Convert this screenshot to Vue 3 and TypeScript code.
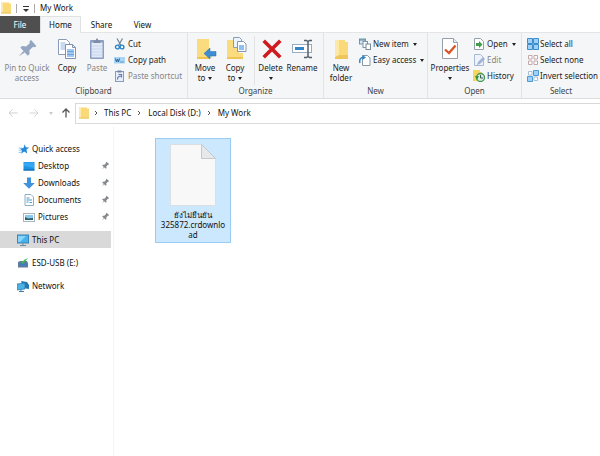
<script setup lang="ts">
interface Command {
  icon: string
  lines: string[]
  size: 'wide' | 'normal' | 'narrow'
  menu?: boolean
  disabled?: boolean
  divided?: boolean
}
interface SmallCommand {
  icon: string
  label: string
  menu?: boolean
  disabled?: boolean
}
interface Group {
  name: string
  key: string
  large: Command[]
  small: SmallCommand[]
}
interface Place {
  icon: string
  label: string
  kind: 'root' | 'pinned'
  current?: boolean
}

const groups: Group[] = [
  {
    name: 'Clipboard',
    key: 'clipboard',
    large: [
      { icon: 'pin', lines: ['Pin to Quick', 'access'], size: 'wide', disabled: true },
      { icon: 'copy', lines: ['Copy'], size: 'narrow' },
      { icon: 'paste', lines: ['Paste'], size: 'narrow', disabled: true },
    ],
    small: [
      { icon: 'cut', label: 'Cut' },
      { icon: 'path', label: 'Copy path' },
      { icon: 'shortcut', label: 'Paste shortcut', disabled: true },
    ],
  },
  {
    name: 'Organize',
    key: 'organize',
    large: [
      { icon: 'move', lines: ['Move', 'to'], size: 'narrow', menu: true },
      { icon: 'copyto', lines: ['Copy', 'to'], size: 'narrow', menu: true },
      { icon: 'delete', lines: ['Delete', ''], size: 'narrow', menu: true, divided: true },
      { icon: 'rename', lines: ['Rename'], size: 'normal' },
    ],
    small: [],
  },
  {
    name: 'New',
    key: 'new',
    large: [{ icon: 'folder', lines: ['New', 'folder'], size: 'narrow' }],
    small: [
      { icon: 'newitem', label: 'New item', menu: true },
      { icon: 'easy', label: 'Easy access', menu: true },
    ],
  },
  {
    name: 'Open',
    key: 'open',
    large: [{ icon: 'properties', lines: ['Properties', ''], size: 'normal', menu: true }],
    small: [
      { icon: 'open', label: 'Open', menu: true },
      { icon: 'edit', label: 'Edit', disabled: true },
      { icon: 'history', label: 'History' },
    ],
  },
  {
    name: 'Select',
    key: 'select',
    large: [],
    small: [
      { icon: 'all', label: 'Select all' },
      { icon: 'none', label: 'Select none' },
      { icon: 'invert', label: 'Invert selection' },
    ],
  },
]

const tabs = ['Home', 'Share', 'View']
const crumbs = ['This PC', 'Local Disk (D:)', 'My Work']
const places: Place[] = [
  { icon: 'star', label: 'Quick access', kind: 'root' },
  { icon: 'desktop', label: 'Desktop', kind: 'pinned' },
  { icon: 'downloads', label: 'Downloads', kind: 'pinned' },
  { icon: 'documents', label: 'Documents', kind: 'pinned' },
  { icon: 'pictures', label: 'Pictures', kind: 'pinned' },
  { icon: 'pc', label: 'This PC', kind: 'root', current: true },
  { icon: 'usb', label: 'ESD-USB (E:)', kind: 'root' },
  { icon: 'network', label: 'Network', kind: 'root' },
]
</script>

<template>
  <div class="explorer">
    <svg class="sprite" aria-hidden="true">
      <symbol id="i-pin" viewBox="0 0 24 24">
        <g transform="rotate(48 12 12)" fill="#94a5c1">
          <path d="M8 3h8v2l-1.500 1v5l3 2.500v2.500H6.500v-2.500l3-2.500V6L8 5z" />
          <path d="M11 16h2l-1 7z" />
        </g>
      </symbol>
      <symbol id="i-copy" viewBox="0 0 24 24">
        <path d="M3.500 2.500h8l3 3v12h-11z" fill="#fff" stroke="#8c9bb4" />
        <path d="M5.500 6h5M5.500 8h7M5.500 10h7M5.500 12h7" stroke="#8db7e6" />
        <path d="M10.500 7.500h7l3 3v11h-10z" fill="#fff" stroke="#7f92b2" />
        <path d="M17.500 7.500v3h3" fill="none" stroke="#7f92b2" />
        <path d="M12 12h7v8h-7z" fill="#9fc8f2" />
        <path d="M12 14.500h7M12 17.500h7" stroke="#6ca6df" />
      </symbol>
      <symbol id="i-paste" viewBox="0 0 24 24">
        <rect x="5" y="3" width="14" height="19" rx="1" fill="#8b9ec4" />
        <path d="M6.500 5.500h11v15h-11z" fill="#e1e9f7" />
        <path d="M7 9h10M7 12h10M7 15h10M7 18h10" stroke="#c6d5ef" />
        <path d="M8.500 3.500h2l1-2h1l1 2h2v2.500h-7z" fill="#7f8ca6" />
      </symbol>
      <symbol id="i-cut" viewBox="0 0 12 12">
        <path d="M3 0.500l4 7M8.500 0.500l-4 7" stroke="#6c8396" stroke-width="1.200" />
        <circle cx="3.400" cy="9" r="1.900" fill="none" stroke="#2a83c8" stroke-width="1.400" />
        <circle cx="8" cy="9" r="1.900" fill="none" stroke="#2a83c8" stroke-width="1.400" />
      </symbol>
      <symbol id="i-path" viewBox="0 0 12 12">
        <rect x="0" y="3" width="11" height="6.500" fill="#a9d4f3" />
        <path d="M1.500 4.500l1 3.500 1-3 1 3 1-3.500M6.500 8h1M8.500 8h1" fill="none" stroke="#24659c" />
      </symbol>
      <symbol id="i-shortcut" viewBox="0 0 12 12">
        <rect x="1.500" y="1.500" width="8" height="10" fill="#e9effa" stroke="#899cc0" />
        <path d="M3.500 0.500h4v2h-4z" fill="#74859f" />
        <path d="M3.500 9.500C3.500 7 4.500 6 7 6M4.500 4.500h3v3" fill="none" stroke="#5f7eb2" stroke-width="1.200" />
      </symbol>
      <symbol id="i-move" viewBox="0 0 24 24">
        <path d="M4 2h12v14h3v5H4z" fill="#fadb7e" />
        <path d="M4 20h12v2H4z" fill="#efc451" />
        <path d="M11 16.500l6-5.500v3.500h6v4.500h-6v3z" fill="#3c8ed0" stroke="#246fae" stroke-width=".5" />
      </symbol>
      <symbol id="i-copyto" viewBox="0 0 24 24">
        <path d="M4 3h12v13h4v5H4z" fill="#fadb7e" />
        <path d="M4 20h16v2H4z" fill="#efc451" />
        <path d="M10.500 0.500h6l2 2v8h-8z" fill="#eaf4fd" stroke="#8a9cb6" />
        <path d="M14.500 4.500h6l2.500 2.500v7.500h-8.500z" fill="#fff" stroke="#8396b3" />
        <path d="M16 8h5v5h-5z" fill="#8fc0ee" />
      </symbol>
      <symbol id="i-delete" viewBox="0 0 24 24">
        <path d="M6 5l14 14M20 5L6 19" stroke="#cf1a20" stroke-width="3.600" stroke-linecap="square" />
      </symbol>
      <symbol id="i-rename" viewBox="0 0 24 24">
        <rect x="2.500" y="7.500" width="19" height="8" fill="#fff" stroke="#9aacbf" />
        <rect x="5" y="10" width="9" height="3" fill="#3285c7" />
        <path d="M14 3.500h2.500l1.500 1 1.500-1H22M18 4v16M14 20.500h2.500l1.500-1 1.500 1H22" fill="none" stroke="#52606d" stroke-width="1.500" />
      </symbol>
      <symbol id="i-folder" viewBox="0 0 24 24">
        <path d="M6 3h10v2h3v17H6z" fill="#f9d978" />
        <path d="M6 3h4v17H6z" fill="#fde9a7" />
        <path d="M6 20l4-2h9v4H6z" fill="#efc65b" />
      </symbol>
      <symbol id="i-newitem" viewBox="0 0 12 12">
        <rect x=".5" y="1" width="6" height="5" fill="#d3e9f8" stroke="#7195ae" />
        <path d="M.5 2h6" stroke="#5a7c94" />
        <rect x="4" y="3.500" width="4.500" height="6" fill="#f9fbfd" stroke="#8095a8" />
        <rect x="7" y="6" width="4.500" height="5.500" fill="#fff" stroke="#7a8b9d" />
      </symbol>
      <symbol id="i-easy" viewBox="0 0 12 12">
        <path d="M3.500 1.500h5l2.500 2.500v7.500H3.500z" fill="#fff" stroke="#8899a8" />
        <path d="M1 9C0 6 1.500 3.500 4 3.500" fill="none" stroke="#3187c6" stroke-width="1.500" />
        <path d="M3.500 1l3.500 2.500L3.500 6z" fill="#3187c6" />
      </symbol>
      <symbol id="i-properties" viewBox="0 0 24 24">
        <path d="M4.500 1.500h11l4 4v16h-15z" fill="#fff" stroke="#95a0aa" />
        <path d="M15.500 1.500v4h4" fill="#e9edf1" stroke="#95a0aa" />
        <path d="M7 12.500l4 3.500L17.500 8.500" fill="none" stroke="#dc5327" stroke-width="2.300" />
      </symbol>
      <symbol id="i-open" viewBox="0 0 12 12">
        <path d="M1.500 .5h6l3 3v8h-9z" fill="#fff" stroke="#94a1aa" />
        <path d="M3 5h3V3l3.500 3.500L6 10V8H3z" fill="#3f9c48" />
      </symbol>
      <symbol id="i-edit" viewBox="0 0 12 12">
        <path d="M1.500 .5h6l3 3v8h-9z" fill="#edf2fb" stroke="#a9b9d5" />
        <path d="M4 11l1-3 5-5 2 2-5 5z" fill="#a2b5d6" />
      </symbol>
      <symbol id="i-history" viewBox="0 0 12 12">
        <path d="M0 0h7v2h2v9H0z" fill="#f7d65f" />
        <circle cx="7.500" cy="7.500" r="4" fill="#d9efdc" stroke="#429a55" stroke-width="1.300" />
        <path d="M7.500 5v3h2.500" fill="none" stroke="#47555c" />
        <path d="M2 6h4L4 10z" fill="#319447" />
      </symbol>
      <symbol id="i-all" viewBox="0 0 12 12">
        <path d="M.5.5h5v5h-5zM6.500.5h5v5h-5zM.5 6.500h5v5h-5zM6.500 6.500h5v5h-5z" fill="#9fd0f8" stroke="#3c8dcb" />
      </symbol>
      <symbol id="i-none" viewBox="0 0 12 12">
        <path d="M1.500 1.500h3.500v3.500h-3.500zM7 1.500h3.500v3.500h-3.500zM1.500 7h3.500v3.500h-3.500zM7 7h3.500v3.500h-3.500z" fill="#fff" stroke="#c5a6a9" />
      </symbol>
      <symbol id="i-invert" viewBox="0 0 12 12">
        <path d="M1.500 1.500h3.500v3.500h-3.500zM7 7h3.500v3.500h-3.500z" fill="#fff" stroke="#a6bfd4" />
        <path d="M6.500.5h5v5h-5zM.5 6.500h5v5h-5z" fill="#9fd0f8" stroke="#4d9bd6" />
      </symbol>
      <symbol id="i-smallfolder" viewBox="0 0 12 12">
        <path d="M1 .5h8v1h2v10H1z" fill="#f9d978" />
        <path d="M1 .5h2v10H1z" fill="#fdeaae" />
        <path d="M1 10.500h10v1H1z" fill="#edc661" />
      </symbol>
      <symbol id="i-star" viewBox="-2 -1 14 14">
        <path d="M7 .5l1.300 3.500 3.700.2-3 2.800 1 4.200-3.700-2.200L3 11.500l.6-3.700L1.500 5.500l4-.8z" fill="#2488dc" />
        <path d="M0 5h4M0 7.500h3M0 10h3" stroke="#74b9ec" stroke-width=".9" />
      </symbol>
      <symbol id="i-desktop" viewBox="0 0 12 12">
        <rect x=".5" y="2" width="11" height="8.500" fill="#1a92e8" />
        <path d="M1 2.500h10v5.500L1 6z" fill="#35a6f2" />
        <path d="M.5 10h11" stroke="#1265a7" />
      </symbol>
      <symbol id="i-downloads" viewBox="0 0 12 12">
        <path d="M4 .5h4v5.500h3.800L6 11.800.2 6H4z" fill="#3d93dc" />
      </symbol>
      <symbol id="i-documents" viewBox="0 0 12 12">
        <path d="M2 .5h6l2.500 2.500v8.500H2z" fill="#fbfdfe" stroke="#94aebe" />
        <path d="M3.500 4h3M3.500 6h5.500M3.500 8h2M6.500 8.500h2.500" stroke="#4e9dcc" />
      </symbol>
      <symbol id="i-pictures" viewBox="0 0 12 12">
        <rect x=".5" y="2.500" width="11" height="8" fill="#fff" stroke="#a8b6bf" />
        <path d="M2 4h8v5H2z" fill="#8bc8ed" />
        <path d="M2 6l3 1.500L10 7v2H2z" fill="#295f68" />
      </symbol>
      <symbol id="i-pc" viewBox="0 0 12 12">
        <rect x=".5" y="1" width="11" height="8" fill="#43b2ed" stroke="#3c84b7" />
        <path d="M1 2h8L3 8H1z" fill="#89d5fa" />
        <path d="M6 9v2M3 11.500h6" stroke="#718a9b" />
      </symbol>
      <symbol id="i-usb" viewBox="0 0 12 12">
        <path d="M1 5l2-1h7l1 2v4.500H1z" fill="#627c9b" />
        <path d="M2 7.500h8" stroke="#3d7fc5" stroke-width="2" />
        <path d="M3 4l3 3 5-6-4 2-1 1.500z" fill="#3bba53" />
      </symbol>
      <symbol id="i-network" viewBox="0 0 12 12">
        <path d="M4 1l6 1 2 3v4L6 8z" fill="#2478ad" />
        <path d="M0 4l8-1v6l-8 1z" fill="#4cb1e5" stroke="#2778ad" stroke-width=".7" />
        <path d="M4 9.500V11M2 11.500h5" stroke="#437ba0" />
      </symbol>
      <symbol id="i-pushpin" viewBox="0 0 12 12">
        <g transform="rotate(42 6 6)" fill="#85898e">
          <path d="M4 1h4v1L7.500 2.500v3L9 6.500v1.300H3V6.500l1.500-1v-3L4 2zM5.600 7.500h.8L6 11.500z" />
        </g>
      </symbol>
      <symbol id="i-left" viewBox="0 0 12 12">
        <path d="M10.500 6H2M5.500 2.500L2 6l3.500 3.500" fill="none" stroke="#cfcfcf" />
      </symbol>
      <symbol id="i-right" viewBox="0 0 12 12">
        <path d="M1.500 6H10M6.500 2.500L10 6 6.500 9.500" fill="none" stroke="#d4d4d4" />
      </symbol>
      <symbol id="i-up" viewBox="0 0 12 12">
        <path d="M6 10.500V2M2.500 5.500L6 2l3.500 3.500" fill="none" stroke="#555" stroke-width="1.300" />
      </symbol>
      <symbol id="i-chevron" viewBox="0 0 6 6">
        <path d="M2 1l2 2-2 2" fill="none" stroke="#555" />
      </symbol>
    </svg>

    <header class="titlebar">
      <svg class="icon"><use href="#i-smallfolder" /></svg>
      <span class="bar"></span>
      <button class="quick" type="button" aria-label="Customize toolbar"></button>
      <span class="bar"></span>
      <h1>My Work</h1>
    </header>

    <nav class="tabs">
      <button class="tab file" type="button">File</button>
      <button v-for="(tab, i) in tabs" :key="tab" class="tab" :class="{ active: i === 0 }" type="button">{{ tab }}</button>
    </nav>

    <div class="ribbon">
      <section v-for="group in groups" :key="group.key" class="group" :class="group.key">
        <div class="commands">
          <button
            v-for="cmd in group.large"
            :key="cmd.icon"
            class="large"
            :class="[cmd.size, { divided: cmd.divided }]"
            :disabled="cmd.disabled"
            type="button"
          >
            <svg class="picture"><use :href="'#i-' + cmd.icon" /></svg>
            <span v-for="(line, i) in cmd.lines" :key="i" class="line">
              <span v-if="line">{{ line }}</span>
              <i v-if="cmd.menu && i === cmd.lines.length - 1" class="caret"></i>
            </span>
          </button>
          <div v-if="group.small.length" class="stack">
            <button v-for="cmd in group.small" :key="cmd.icon" class="small" :disabled="cmd.disabled" type="button">
              <svg class="icon"><use :href="'#i-' + cmd.icon" /></svg>
              <span>{{ cmd.label }}</span>
              <i v-if="cmd.menu" class="caret"></i>
            </button>
          </div>
        </div>
        <h2>{{ group.name }}</h2>
      </section>
    </div>

    <div class="location">
      <button class="nav" type="button" aria-label="Back" disabled><svg class="icon"><use href="#i-left" /></svg></button>
      <button class="nav" type="button" aria-label="Forward" disabled><svg class="icon"><use href="#i-right" /></svg></button>
      <button class="recent" type="button" aria-label="Recent locations"><i class="caret"></i></button>
      <button class="nav up" type="button" aria-label="Up"><svg class="icon"><use href="#i-up" /></svg></button>
      <div class="address">
        <svg class="icon"><use href="#i-smallfolder" /></svg>
        <template v-for="crumb in crumbs" :key="crumb">
          <svg class="chevron"><use href="#i-chevron" /></svg>
          <a href="#">{{ crumb }}</a>
        </template>
      </div>
    </div>

    <div class="body">
      <nav class="places">
        <a v-for="place in places" :key="place.label" href="#" class="place" :class="[place.kind, { current: place.current }]">
          <svg class="icon"><use :href="'#i-' + place.icon" /></svg>
          <span>{{ place.label }}</span>
          <svg v-if="place.kind === 'pinned'" class="pushpin"><use href="#i-pushpin" /></svg>
        </a>
      </nav>
      <main class="files">
        <button class="item" type="button">
          <svg class="document" viewBox="0 0 46 62">
            <path d="M.5.500h31l14 14v47H.5z" fill="#f8f8f8" stroke="#dcdfe1" />
            <path d="M31.500.500v14h14z" fill="#e6e8e9" stroke="#c5c9cc" stroke-linejoin="round" />
          </svg>
          <span class="name">ยังไม่ยืนยัน 325872.crdownload</span>
        </button>
      </main>
    </div>
  </div>
</template>

<style>
body {
  margin: 0;
  background: #fff;
}
</style>

<style scoped>
.explorer {
  display: flex;
  flex-direction: column;
  min-height: 100vh;
  font: 8px/10px "Noto Sans", "Open Sans", sans-serif;
  color: #111;
  background: #fff;
}
.sprite {
  position: absolute;
  width: 0;
  height: 0;
}
button {
  margin: 0;
  padding: 0;
  border: 0;
  background: none;
  font: inherit;
  color: inherit;
}
a {
  color: inherit;
  text-decoration: none;
}
h1,
h2 {
  margin: 0;
  font: inherit;
}
.icon {
  flex: none;
  width: 12px;
  height: 12px;
}
.caret {
  display: block;
  border: 2px solid transparent;
  border-top: 3px solid #222;
  border-bottom: 0;
}

.titlebar {
  display: flex;
  align-items: center;
  height: 16px;
}
.bar {
  width: 1px;
  height: 9px;
  margin: 0 4px;
  background: #aaa;
}
.quick {
  width: 9px;
  height: 9px;
  display: flex;
  flex-direction: column;
  align-items: center;
  gap: 2px;
}
.quick::before {
  content: "";
  width: 6px;
  height: 1px;
  margin-top: 2px;
  background: #333;
}
.quick::after {
  content: "";
  border: 3px solid transparent;
  border-top-color: #333;
  border-bottom: 0;
}
.titlebar h1 {
  padding-left: 1px;
}

.tabs {
  display: flex;
  height: 17px;
  border-bottom: 1px solid #e4e5e6;
  box-sizing: border-box;
}
.tab {
  width: 41px;
  height: 17px;
}
.file {
  width: 40px;
  color: #fff;
  background: #4f4f4f;
}
.active {
  border: 1px solid #e0e1e2;
  border-bottom: 0;
  background: #f5f6f7;
}

.ribbon {
  display: flex;
  height: 66px;
  box-sizing: border-box;
  color: #222;
  background: #f5f6f7;
  border-bottom: 1px solid #dcddde;
}
.group {
  display: flex;
  flex-direction: column;
  flex: none;
  box-sizing: border-box;
  padding: 3px 0 1px;
  border-right: 1px solid #e2e3e4;
}
.group h2 {
  line-height: 12px;
  text-align: center;
  color: #444;
}
.commands {
  display: flex;
  flex: 1;
}
.clipboard {
  width: 188px;
}
.organize {
  width: 136px;
}
.new {
  width: 104px;
}
.open {
  width: 94px;
}
.select {
  flex: 1;
  border-right: 0;
}
.clipboard .commands,
.organize .commands,
.new .commands {
  padding-left: 2px;
}
.select .commands {
  padding-left: 3px;
}
.large {
  display: flex;
  flex-direction: column;
  align-items: center;
  width: 30px;
  white-space: nowrap;
}
.large.wide {
  width: 50px;
}
.large.normal {
  width: 32px;
}
.open .large {
  width: 44px;
}
.large.divided {
  width: 32px;
  margin-left: 4px;
  border-left: 1px solid #e2e3e4;
}
.picture {
  width: 24px;
  height: 24px;
  margin: 1px 0 2px;
}
.line {
  display: flex;
  align-items: center;
  gap: 3px;
  height: 10px;
  line-height: 10px;
}
.stack {
  display: flex;
  flex-direction: column;
  align-items: flex-start;
  padding-left: 2px;
}
.new .stack {
  padding-left: 3px;
}
.open .stack {
  padding-left: 1px;
}
.small {
  display: flex;
  align-items: center;
  gap: 2px;
  height: 16px;
  white-space: nowrap;
}
.select .small {
  gap: 1px;
}
.small .caret {
  margin-left: 2px;
}
button:disabled {
  color: #858585;
}

.location {
  display: flex;
  align-items: center;
  height: 28px;
  padding-left: 7px;
}
.nav {
  display: flex;
  margin-right: 9px;
}
.recent {
  display: flex;
  align-items: center;
}
.recent .caret {
  border-top-color: #ccc;
}
.up {
  margin: 0 3px 0 7px;
}
.address {
  display: flex;
  align-items: center;
  flex: 1;
  height: 21px;
  box-sizing: border-box;
  padding-left: 2px;
  border: 1px solid #d9d9d9;
  border-right: 0;
}
.chevron {
  width: 6px;
  height: 6px;
  margin: 0 6px 0 5px;
}
.address .icon + .chevron {
  margin: 0 5px 0 3px;
}

.body {
  display: flex;
  flex: 1;
}
.places {
  display: flex;
  flex-direction: column;
  width: 111px;
  padding: 13px 2px 0 0;
  border-right: 1px solid #f4f4f4;
}
.place {
  display: flex;
  align-items: center;
  gap: 3px;
  height: 17px;
  padding-left: 17px;
}
.place.pinned {
  padding-left: 23px;
}
.place.pinned + .root,
.place.root + .root {
  margin-top: 6px;
}
.current {
  background: #d9d9d9;
}
.pushpin {
  width: 10px;
  height: 10px;
  margin-left: auto;
  margin-right: 1px;
}
.files {
  flex: 1;
  padding: 11px 0 0 41px;
}
.item {
  display: flex;
  flex-direction: column;
  align-items: center;
  width: 76px;
  box-sizing: border-box;
  padding: 5px 4px 2px;
  border: 1px solid #99cdf5;
  background: #cce8ff;
}
.document {
  width: 46px;
  height: 62px;
  margin-bottom: 4px;
}
.name {
  width: 67px;
  overflow-wrap: anywhere;
}
</style>
